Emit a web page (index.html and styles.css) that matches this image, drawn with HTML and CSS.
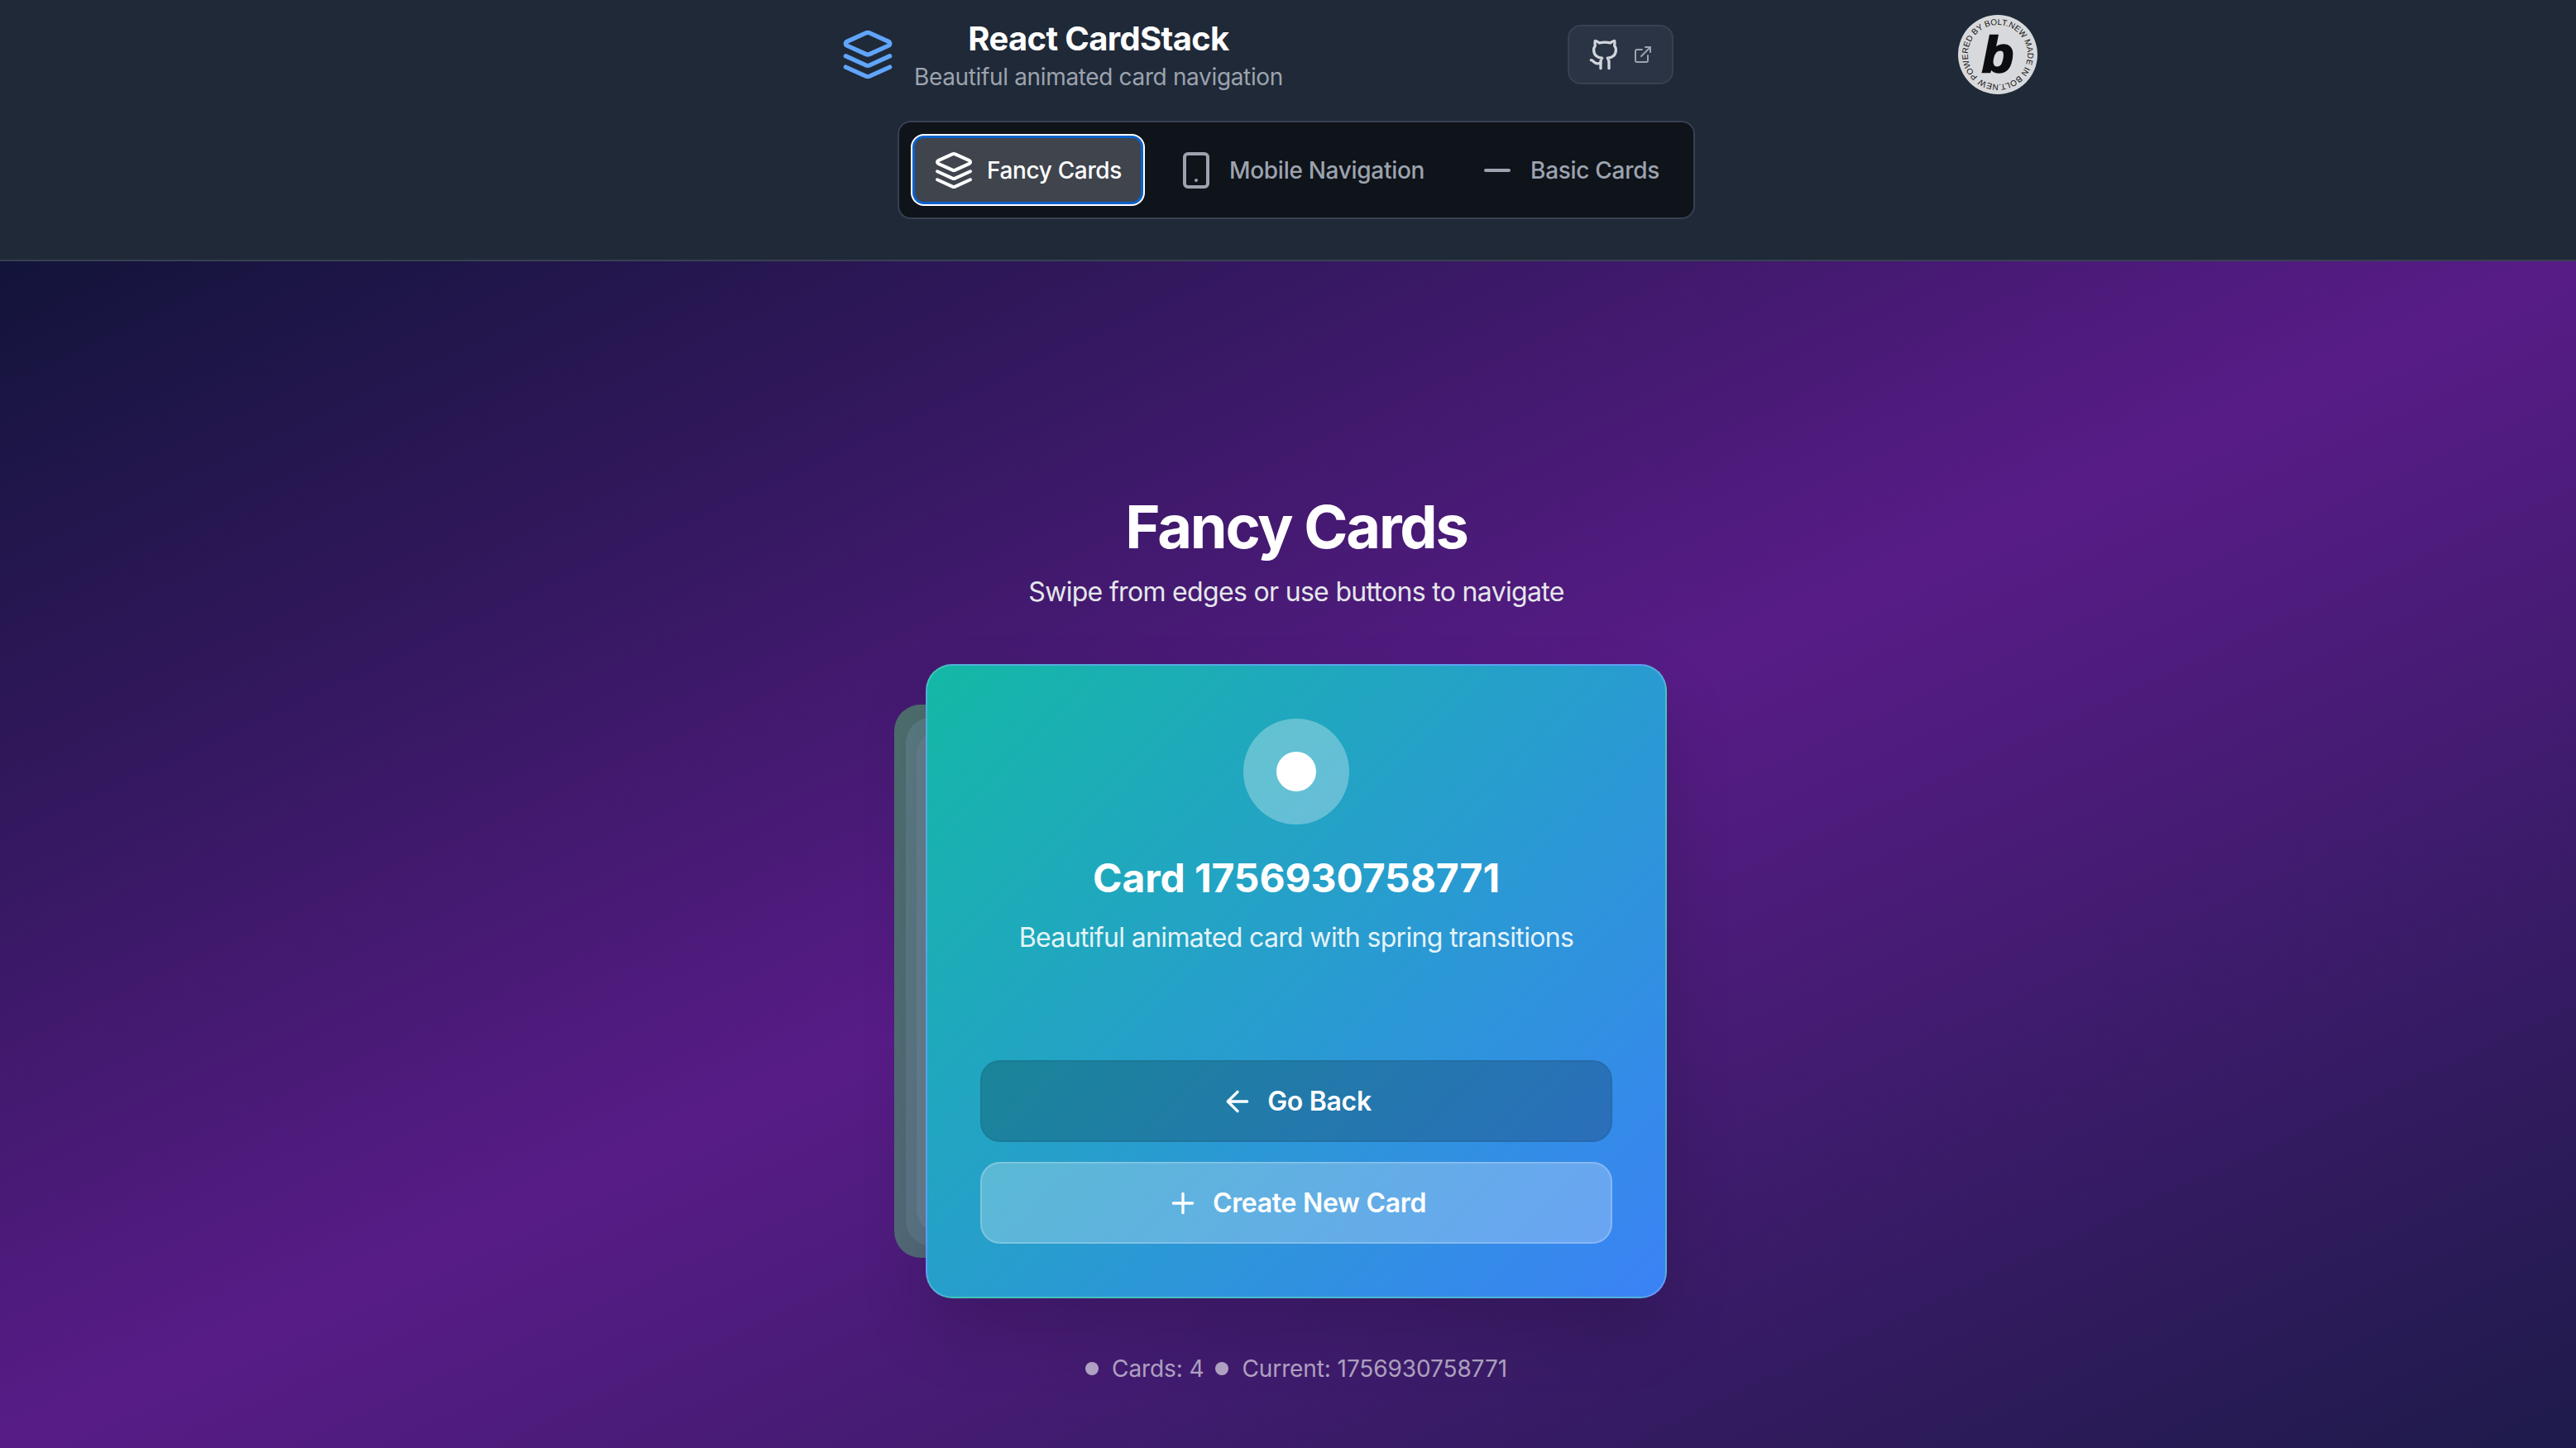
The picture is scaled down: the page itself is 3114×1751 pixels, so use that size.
FILE: index.html
```html
<!DOCTYPE html>
<html lang="en">
<head>
  <meta charset="UTF-8" />
  <title>React CardStack</title>
  <link rel="stylesheet" href="styles.css">
</head>
<body>
  <header class="topbar">
    <div class="brand-row">
      <svg class="icon logo-icon" viewBox="0 0 24 24"><path d="m12.83 2.18a2 2 0 0 0-1.66 0L2.6 6.08a1 1 0 0 0 0 1.83l8.58 3.91a2 2 0 0 0 1.66 0l8.58-3.9a1 1 0 0 0 0-1.83Z"/><path d="m22 17.65-9.17 4.16a2 2 0 0 1-1.66 0L2 17.65"/><path d="m22 12.65-9.17 4.16a2 2 0 0 1-1.66 0L2 12.65"/></svg>
      <div class="brand-text">
        <h1>React CardStack</h1>
        <p>Beautiful animated card navigation</p>
      </div>
      <a class="repo-link">
        <svg class="icon repo-icon" viewBox="0 0 24 24"><path d="M15 22v-4a4.8 4.8 0 0 0-1-3.5c3 0 6-2 6-5.5.08-1.25-.27-2.48-1-3.5.28-1.15.28-2.35 0-3.5 0 0-1 0-3 1.5-2.64-.5-5.36-.5-8 0C6 2 5 2 5 2c-.3 1.15-.3 2.35 0 3.5A5.403 5.403 0 0 0 4 9c0 3.5 3 5.5 6 5.5-.39.49-.68 1.05-.85 1.65-.17.6-.22 1.23-.15 1.85v4"/><path d="M9 18c-4.51 2-5-2-7-2"/></svg>
        <svg class="icon external-icon" viewBox="0 0 24 24"><path d="M15 3h6v6"/><path d="M10 14 21 3"/><path d="M18 13v6a2 2 0 0 1-2 2H5a2 2 0 0 1-2-2V8a2 2 0 0 1 2-2h6"/></svg>
      </a>
    </div>

    <nav class="tabs">
      <button class="tab active">
        <svg class="icon" viewBox="0 0 24 24"><path d="m12.83 2.18a2 2 0 0 0-1.66 0L2.6 6.08a1 1 0 0 0 0 1.83l8.58 3.91a2 2 0 0 0 1.66 0l8.58-3.9a1 1 0 0 0 0-1.83Z"/><path d="m22 17.65-9.17 4.16a2 2 0 0 1-1.66 0L2 17.65"/><path d="m22 12.65-9.17 4.16a2 2 0 0 1-1.66 0L2 12.65"/></svg>
        Fancy Cards
      </button>
      <button class="tab">
        <svg class="icon" viewBox="0 0 24 24"><rect width="14" height="20" x="5" y="2" rx="2" ry="2"/><path d="M12 18h.01"/></svg>
        Mobile Navigation
      </button>
      <button class="tab">
        <svg class="icon" viewBox="0 0 24 24"><path d="M5 12h14"/></svg>
        Basic Cards
      </button>
    </nav>

    <!-- bolt badge -->
    <div class="bolt-badge">
      <svg viewBox="0 0 96 96">
        <defs><path id="badgeRing" d="M48 48m-36 0a36 36 0 1 1 72 0a36 36 0 1 1-72 0"/></defs>
        <circle cx="48" cy="48" r="48" fill="#d8d9dc"/>
        <text class="badge-ring-text" transform="rotate(-48 48 48)"><textPath href="#badgeRing" textLength="222">POWERED BY BOLT.NEW MADE IN BOLT.NEW</textPath></text>
        <text class="badge-b" x="48" y="69" text-anchor="middle">b</text>
      </svg>
    </div>
  </header>

  <main class="stage">
    <h2 class="stage-title">Fancy Cards</h2>
    <p class="stage-sub">Swipe from edges or use buttons to navigate</p>

    <div class="stack">
      <div class="back-card back-1"></div>
      <div class="back-card back-2"></div>
      <div class="back-card back-3"></div>
      <div class="card">
        <div class="card-badge"><span class="card-dot"></span></div>
        <h3>Card 1756930758771</h3>
        <p>Beautiful animated card with spring transitions</p>
        <div class="card-actions">
          <button class="card-btn btn-back">
            <svg class="icon" viewBox="0 0 24 24"><path d="m12 19-7-7 7-7"/><path d="M19 12H5"/></svg>
            Go Back
          </button>
          <button class="card-btn btn-create">
            <svg class="icon" viewBox="0 0 24 24"><path d="M5 12h14"/><path d="M12 5v14"/></svg>
            Create New Card
          </button>
        </div>
      </div>
    </div>

    <div class="stats">
      <span class="stat"><i></i>Cards: 4</span>
      <span class="stat"><i></i>Current: 1756930758771</span>
    </div>
  </main>
</body>
</html>
```
FILE: styles.css
```css
* {
  box-sizing: border-box;
}

body {
  margin: 0;
  font-family: Inter, "Noto Sans", sans-serif;
  background: #1f2937;
  color: white;
  height: 1751px;
  overflow: hidden;
  display: flex;
  flex-direction: column;
}

.icon {
  width: 48px;
  height: 48px;
  fill: none;
  stroke: currentColor;
  stroke-width: 2;
  stroke-linecap: round;
  stroke-linejoin: round;
  flex-shrink: 0;
}

.topbar {
  position: relative;
  height: 316px;
  border-bottom: 2px solid #374151;
  background: #1f2937;
  display: flex;
  flex-direction: column;
  align-items: center;
  padding: 20px 0 0 20px;
}

.brand-row {
  display: flex;
  align-items: center;
  margin-left: -94px;
  height: 92px;
}

.logo-icon {
  width: 64px;
  height: 64px;
  color: #60a5fa;
}

.brand-text {
  margin-left: 24px;
  text-align: center;
}

.brand-text h1 {
  margin: 0;
  font-size: 40px;
  line-height: 48px;
  font-weight: 700;
  letter-spacing: -0.66px;
  padding-top: 4px;
}

.brand-text p {
  margin: 0;
  font-size: 28px;
  line-height: 40px;
  color: #9ca3af;
  letter-spacing: -0.35px;
  padding-top: 2px;
}

.repo-link {
  margin-left: 344px;
  width: 128px;
  height: 72px;
  display: flex;
  align-items: center;
  justify-content: center;
  gap: 14px;
  background: #2a3444;
  border: 2px solid #374151;
  border-radius: 16px;
  color: #d1d5db;
}

.repo-icon {
  width: 40px;
  height: 40px;
}

.external-icon {
  width: 24px;
  height: 24px;
  color: #9ca3af;
}

.tabs {
  margin-top: 34px;
  display: flex;
  gap: 12px;
  padding: 14px;
  width: 964px;
  height: 119px;
  background: #0f131a;
  border: 2px solid #374151;
  border-radius: 16px;
}

.tab {
  display: flex;
  align-items: center;
  gap: 16px;
  padding: 0 26px;
  height: 87px;
  border: none;
  background: none;
  border-radius: 16px;
  font-family: inherit;
  font-size: 28px;
  font-weight: 500;
  letter-spacing: -0.3px;
  color: #9ca3af;
  white-space: nowrap;
}

.tab.active {
  color: white;
  background: #3f444d;
  border: 2px solid white;
  box-shadow: inset 0 0 0 3px #0a62cc;
  letter-spacing: -0.36px;
}

.bolt-badge {
  position: absolute;
  left: 2367px;
  top: 18px;
  width: 96px;
  height: 96px;
}

.bolt-badge svg {
  display: block;
}

.badge-ring-text {
  font-family: "Liberation Sans", sans-serif;
  font-size: 10px;
  fill: #111;
}

.badge-b {
  font-family: "Liberation Sans", sans-serif;
  font-size: 62px;
  font-weight: 700;
  font-style: italic;
  fill: #0b0d10;
  stroke: #0b0d10;
  stroke-width: 2.5;
}

.stage {
  flex: 1;
  background: linear-gradient(to bottom right, #12143a, #581c87, #1e1b4b);
  display: flex;
  flex-direction: column;
  align-items: center;
  padding: 281px 0 0 20px;
}

.stage-title {
  margin: 0;
  font-size: 72px;
  line-height: 80px;
  font-weight: 700;
  letter-spacing: -2.2px;
}

.stage-sub {
  margin: 19px 0 0;
  font-size: 32px;
  line-height: 40px;
  color: #e5e7eb;
  letter-spacing: -0.68px;
}

.stack {
  position: relative;
  margin-top: 67px;
  width: 896px;
  height: 767px;
}

.back-card {
  position: absolute;
  top: 49px;
  bottom: 49px;
  width: 200px;
  border-radius: 32px;
}

.back-1 {
  left: -38px;
  background: linear-gradient(160deg, #4e6e6d, #53697a);
}

.back-2 {
  left: -24px;
  top: 64px;
  bottom: 63px;
  background: linear-gradient(160deg, #5a7b83, #5c7587);
}

.back-3 {
  left: -11px;
  top: 78px;
  bottom: 77px;
  background: linear-gradient(160deg, #66808f, #677f92);
}

.card {
  position: relative;
  height: 100%;
  padding: 64px;
  border-radius: 32px;
  border: 2px solid rgba(255, 255, 255, 0.2);
  background: linear-gradient(135deg, #14b8a6, #3b82f6);
  display: flex;
  flex-direction: column;
  align-items: center;
  text-align: center;
  box-shadow: 0 40px 80px rgba(0, 0, 0, 0.15);
}

.card-badge {
  width: 128px;
  height: 128px;
  border-radius: 50%;
  background: rgba(255, 255, 255, 0.3);
  display: flex;
  align-items: center;
  justify-content: center;
}

.card-dot {
  width: 48px;
  height: 48px;
  border-radius: 50%;
  background: white;
}

.card h3 {
  margin: 33px 0 0;
  font-size: 48px;
  line-height: 64px;
  font-weight: 700;
  letter-spacing: -0.1px;
}

.card p {
  margin: 20px 0 0;
  font-size: 32px;
  line-height: 40px;
  color: rgba(255, 255, 255, 0.9);
  letter-spacing: -0.65px;
}

.card-actions {
  margin-top: auto;
  width: 100%;
  display: flex;
  flex-direction: column;
  gap: 24px;
}

.card-btn {
  height: 99px;
  display: flex;
  align-items: center;
  justify-content: center;
  gap: 16px;
  border-radius: 24px;
  font-family: inherit;
  font-size: 32px;
  font-weight: 600;
  letter-spacing: -0.3px;
  color: white;
}

.card-btn .icon {
  width: 40px;
  height: 40px;
}

.btn-back {
  background: rgba(0, 0, 0, 0.2);
  border: 2px solid rgba(0, 0, 0, 0.05);
}

.btn-create {
  background: rgba(255, 255, 255, 0.25);
  border: 2px solid rgba(255, 255, 255, 0.2);
}

.stats {
  margin-top: 65px;
  display: flex;
  gap: 14px;
  font-size: 28px;
  line-height: 40px;
  color: rgba(255, 255, 255, 0.6);
  letter-spacing: -0.1px;
}

.stat {
  display: flex;
  align-items: center;
  gap: 16px;
}

.stat i {
  width: 16px;
  height: 16px;
  border-radius: 50%;
  background: rgba(255, 255, 255, 0.6);
}
```
